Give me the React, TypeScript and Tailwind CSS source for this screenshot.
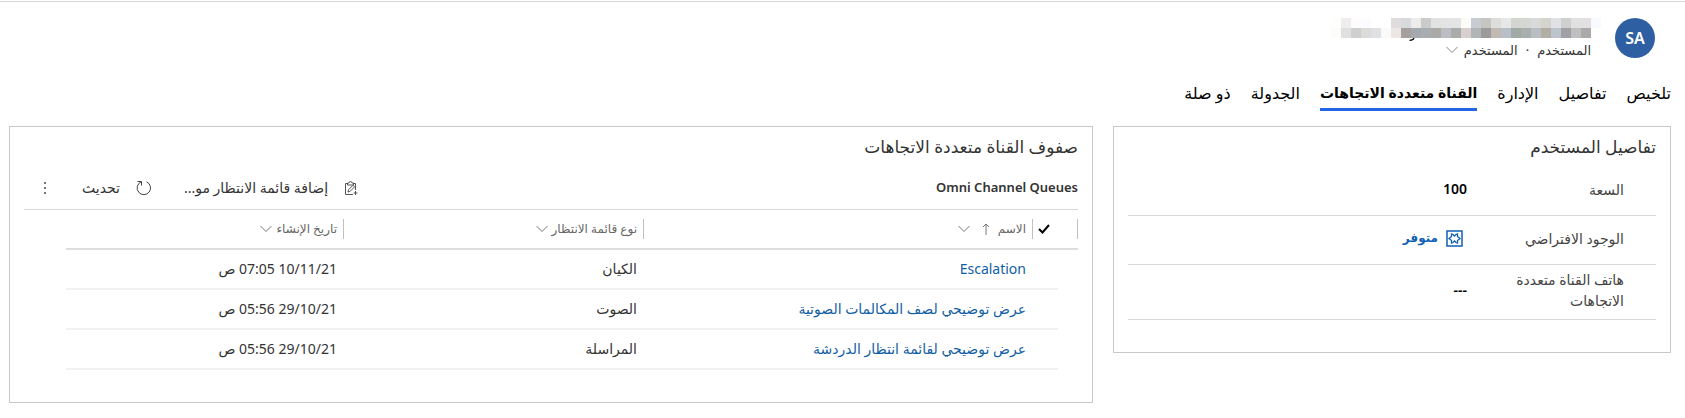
import type { ReactNode } from "react";

type Queue = { name: string; type: string; created: string };

const queues: Queue[] = [
  { name: "Escalation", type: "الكيان", created: "10/11/21 07:05 ص" },
  { name: "عرض توضيحي لصف المكالمات الصوتية", type: "الصوت", created: "29/10/21 05:56 ص" },
  { name: "عرض توضيحي لقائمة انتظار الدردشة", type: "المراسلة", created: "29/10/21 05:56 ص" },
];

const tabs = ["تلخيص", "تفاصيل", "الإدارة", "القناة متعددة الاتجاهات", "الجدولة", "ذو صلة"];

// Redacted display name: two rows of 10px blocks, listed from left to right.
const mosaic: string[][] = [
  ["#fefefc", "#eeeeee", "#fdfcfb", "#fafcff", "#ffffff", "#ffffff", "#e0dcdd", "#d7d9dc", "#edecea", "#cacccc", "#e2e2e2", "#e3e3e3", "#e3e4e4", "#fcfcf8", "#c8ccd0", "#c5c6c2", "#dfdddb", "#e6e8e7", "#d3d6d0", "#d5d8d2", "#d9d9da", "#d4d3ce", "#e0e2e5", "#cfcfcf", "#e1e1e1", "#e2e0e1", "#f8faff"],
  ["#fcfcfa", "#e0e0e0", "#cfcfcf", "#dddbd9", "#dfe1e4", "#fafafa", "#ece7e5", "#a5a09d", "#a5a8ad", "#a8adb0", "#acaaa7", "#bbbcc4", "#a8acab", "#d7d0ce", "#b1b5b8", "#9b9b9c", "#c1bab3", "#b9bfc8", "#a0aaa4", "#a9afad", "#b9bec2", "#b2aea4", "#bec4cc", "#a1a0a6", "#bfbfbf", "#aba9ab", "#ffffff"],
];

function Chevron() {
  return (
    <svg viewBox="0 0 12 8" className="h-2 w-3 shrink-0" fill="none" stroke="currentColor" strokeWidth="0.9" aria-hidden="true">
      <path d="M0.5 1 6 6.5 11.5 1" />
    </svg>
  );
}

function Separated({ children }: { children?: ReactNode }) {
  return <div className="flex h-5 items-center gap-1 border-s border-[#c0c0c0] ps-1.5">{children}</div>;
}

function Field({ label, children }: { label: string; children: ReactNode }) {
  return (
    <div className="flex min-h-[49px] items-center border-b border-[#d8d8d8] ps-8 pt-1 pb-2">
      <dt className="w-[157px] shrink-0 pe-8 text-sm leading-[21px] text-[#444]">{label}</dt>
      <dd className="text-sm font-semibold text-black">{children}</dd>
    </div>
  );
}

export default function App() {
  return (
    <main
      dir="rtl"
      className="bg-white pt-px font-['Noto_Sans','DejaVu_Sans',sans-serif] text-[#333]"
    >
      <div className="border-t border-[#d6d8d7] pt-4 pr-3.5 pb-3.5 pl-[9px]">
        <header className="flex items-start gap-6 pr-4">
          <div className="flex size-10 shrink-0 items-center justify-center rounded-full bg-[#2f5fa3] text-base font-semibold text-white">
            SA
          </div>
          <div>
            <div dir="ltr" className="relative -mr-2.5 h-5" aria-hidden="true">
              {mosaic.map((row, r) => (
                <div key={r} className="flex justify-end">
                  {row.map((color, c) => (
                    <span key={c} className="size-2.5" style={{ backgroundColor: color }} />
                  ))}
                </div>
              ))}
              <svg viewBox="0 0 6 3" className="absolute top-full right-[186px] h-[3px] w-1.5" fill="none" stroke="#000" strokeWidth="1.2">
                <path d="M5 0C4.500 1.500 3 2.300 .5 2.300" />
              </svg>
            </div>
            <div className="flex items-center gap-2 pt-0.5 text-[13px] leading-5">
              <span>المستخدم</span>
              <span>·</span>
              <button type="button" className="flex items-center gap-1.5">
                المستخدم
                <span className="text-[#777]">
                  <Chevron />
                </span>
              </button>
            </div>
          </div>
        </header>

        <nav className="mt-5 flex gap-5">
          {tabs.map((tab, i) => (
            <a
              key={tab}
              href="#"
              aria-current={i === 3 ? "page" : undefined}
              className={
                i === 3
                  ? "border-b-[3px] border-[#2266e3] pb-0.5 text-sm leading-[26px] font-semibold text-black"
                  : "border-b-[3px] border-transparent pb-0.5 text-base leading-[26px] text-black"
              }
            >
              {tab}
            </a>
          ))}
        </nav>

        <div className="mt-[15px] grid grid-cols-[558fr_1084fr] items-start gap-5">
          <section className="border border-[#c8c8c8] px-3.5 pt-2 pb-8">
            <h2 className="text-[17px] leading-6">تفاصيل المستخدم</h2>
            <dl className="mt-2">
              <Field label="السعة">100</Field>
              <Field label="الوجود الافتراضي">
                <a href="#" className="flex items-center gap-2 ps-1 text-xs text-[#1160b7]">
                  <svg viewBox="0 0 17 17" className="size-[17px]" fill="none" stroke="currentColor" strokeWidth="1.5" aria-hidden="true">
                    <rect x="1" y="1" width="15" height="15" />
                    <path d="M5.500 4v2.500l-2.500 2 2.500 2V13l1.500-.5 1.500-1.500 1.500 1.500 1.500.5v-2.500l2.500-2-2.500-2V4L10 4.500 8.500 6 7 4.500z" strokeWidth="1.300" />
                  </svg>
                  متوفر
                </a>
              </Field>
              <Field label="هاتف القناة متعددة الاتجاهات">---</Field>
            </dl>
          </section>

          <section className="border border-[#c8c8c8] px-3.5 pt-2 pb-8">
            <h2 className="text-[17px] leading-6">صفوف القناة متعددة الاتجاهات</h2>
            <div className="mt-2 flex h-[43px] items-center justify-between border-b border-[#d8d8d8]">
              <h3 className="text-[13px] font-semibold">Omni Channel Queues</h3>
              <div className="flex items-center gap-8 pl-5 text-sm">
                <button type="button" className="flex items-center gap-4">
                  <svg viewBox="0 0 14 14" className="size-3.5" fill="none" stroke="#555" aria-hidden="true">
                    <path d="M3.500 2.500h-2v11H9M9.500 2.500h2V9M3.500 4V2H5a1.500 1.500 0 0 1 3 0h1.500v2zM4 11l.5-2.200L9 4.300l1.600 1.600-4.500 4.500zM11.500 10v4M9.500 12h4" />
                  </svg>
                  إضافة قائمة الانتظار مو...
                </button>
                <button type="button" className="flex items-center gap-4">
                  <svg viewBox="0 0 16 16" className="size-4" fill="none" stroke="#444" aria-hidden="true">
                    <path d="M10.500 1.800a6.700 6.700 0 1 1-5.500.1M1.500 1.500H5.500V5.500" />
                  </svg>
                  تحديث
                </button>
                <button type="button" aria-label="المزيد" className="flex flex-col gap-[3px] ps-1">
                  <span className="size-0.5 bg-[#777]" />
                  <span className="size-0.5 bg-[#777]" />
                  <span className="size-0.5 bg-[#777]" />
                </button>
              </div>
            </div>

            <div className="pl-[42px]">
              <table className="w-full table-fixed border-collapse text-sm">
                <colgroup>
                  <col className="w-5" />
                  <col className="w-[25px]" />
                  <col />
                  <col className="w-[300px]" />
                  <col className="w-[278px]" />
                </colgroup>
                <thead>
                  <tr className="h-[39px] border-b-2 border-[#dedede] text-xs text-[#666]">
                    <td>
                      <Separated />
                    </td>
                    <td className="ps-2">
                      <svg viewBox="0 0 12 10" className="h-2.5 w-3" fill="none" stroke="#000" strokeWidth="2" aria-hidden="true">
                        <path d="M1 5l3.500 3.500L11 1" />
                      </svg>
                    </td>
                    <th scope="col" className="font-normal">
                      <Separated>
                        الاسم
                        <svg viewBox="0 0 8 12" className="ms-1 me-2 h-3 w-2 shrink-0" fill="none" stroke="currentColor" strokeWidth="0.9" aria-hidden="true">
                          <path d="M4 12V1M1 4l3-3 3 3" />
                        </svg>
                        <Chevron />
                      </Separated>
                    </th>
                    <th scope="col" className="font-normal">
                      <Separated>
                        نوع قائمة الانتظار
                        <Chevron />
                      </Separated>
                    </th>
                    <th scope="col" className="font-normal">
                      <Separated>
                        تاريخ الإنشاء
                        <Chevron />
                      </Separated>
                    </th>
                  </tr>
                </thead>
                <tbody>
                  {queues.map((q) => (
                    <tr key={q.name} className="h-10">
                      <td />
                      <td className="border-b-2 border-[#f1f1f1]" />
                      <td className="border-b-2 border-[#f1f1f1] ps-[7px]">
                        <a href="#" className="text-[#115ea3]">
                          {q.name}
                        </a>
                      </td>
                      <td className="border-b-2 border-[#f1f1f1] ps-[7px]">{q.type}</td>
                      <td className="border-b-2 border-[#f1f1f1] ps-[7px]">{q.created}</td>
                    </tr>
                  ))}
                </tbody>
              </table>
            </div>
          </section>
        </div>
      </div>
    </main>
  );
}
